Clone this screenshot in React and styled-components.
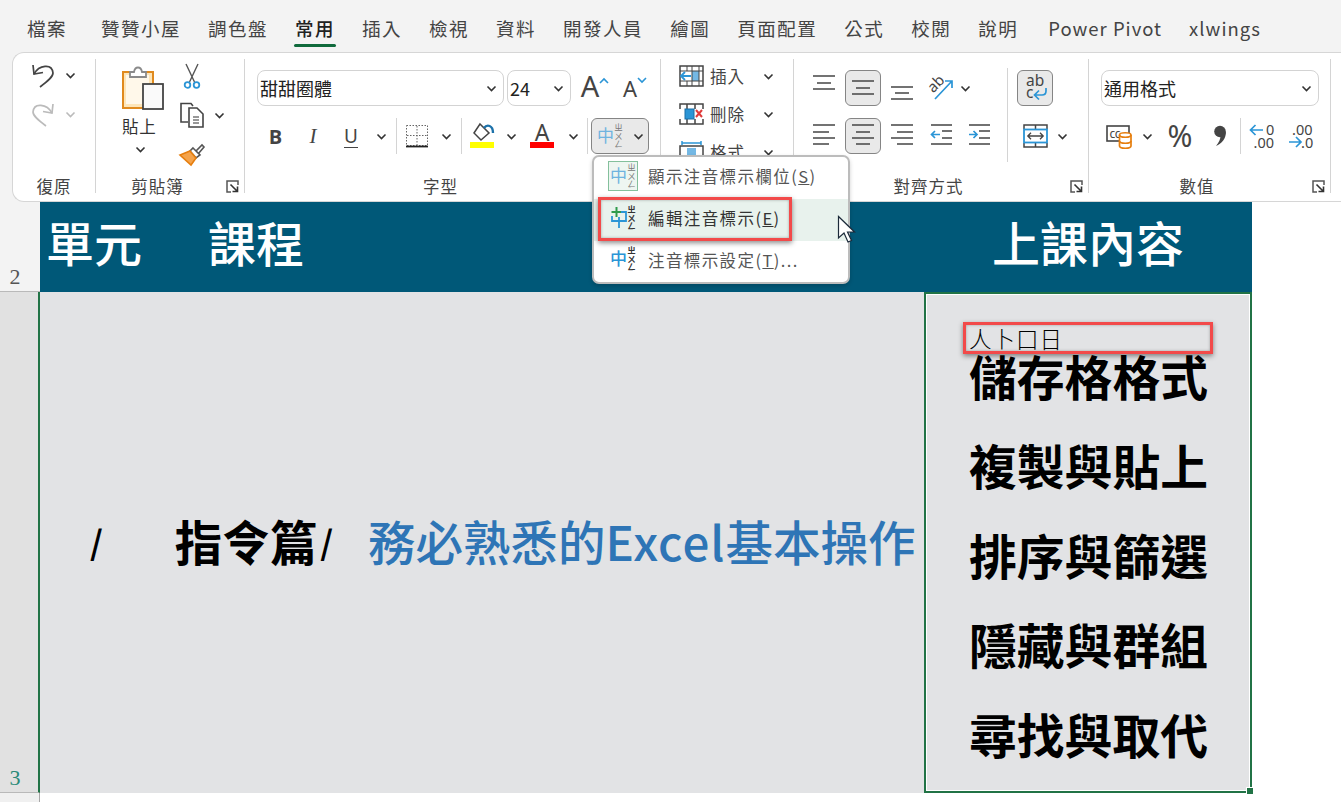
import React from 'react';
import styled, { createGlobalStyle } from 'styled-components';

const CJK = `"Noto Sans CJK TC", "Noto Sans", sans-serif`;
const INK = '#444';
const BLUE = '#2b95d6';
const ORANGE = '#e67e0e';

const GlobalStyle = createGlobalStyle`
  html, body { margin: 0; padding: 0; background: #fff; }
  body { font-family: ${CJK}; }
  * { box-sizing: border-box; }
  svg { overflow: visible; }
`;

const Page = styled.div`
  position: relative;
  width: 1341px;
  height: 802px;
  overflow: hidden;
  background: #f3f3f3;
`;

/* ---------- tabs ---------- */
const TabBar = styled.nav`
  display: flex;
  height: 52px;
  padding: 15px 0 0 27px;
  gap: 27px;
`;
const Tab = styled.span`
  position: relative;
  height: 26px;
  line-height: 26px;
  font-size: 18.5px;
  letter-spacing: 1.5px;
  white-space: nowrap;
  color: ${p => (p.$active ? '#222' : '#444')};
  font-weight: ${p => (p.$active ? 500 : 400)};
  margin-right: ${p => p.$after || 0}px;
  margin-left: ${p => p.$before || 0}px;
  ${p => p.$latin && 'letter-spacing: 1px;'}
  ${p => p.$active && `
    &::after {
      content: '';
      position: absolute;
      left: -1px;
      right: -1px;
      top: 29px;
      height: 3px;
      border-radius: 2px;
      background: #106a3c;
    }
  `}
`;

/* ---------- ribbon ---------- */
const Ribbon = styled.section`
  display: flex;
  height: 150px;
  margin-left: 12px;
  padding: 6px 0 8px;
  background: #fff;
  border: 1px solid #d6d6d6;
  border-right: none;
  border-radius: 12px 0 0 12px;
`;
const Group = styled.div`
  position: relative;
  display: flex;
  flex-direction: column;
  flex: 0 0 ${p => p.$w}px;
  border-right: 1px solid #d4d4d4;
`;
const GroupBody = styled.div`
  flex: 1;
  display: flex;
  min-height: 0;
  padding-left: ${p => p.$left || 0}px;
  padding-top: ${p => p.$top || 0}px;
`;
const GroupLabel = styled.div`
  height: 24px;
  margin-bottom: -5px;
  line-height: 24px;
  text-align: center;
  font-size: 16.5px;
  letter-spacing: 1px;
  color: #444;
  padding-right: ${p => p.$pad || 0}px;
`;
const LauncherMark = styled.svg`
  position: absolute;
  right: 5px;
  bottom: 0;
`;
const Stack = styled.div`
  display: flex;
  flex-direction: column;
  gap: ${p => p.$gap ?? 12}px;
  padding-top: ${p => p.$top || 0}px;
`;
const Row = styled.div`
  display: flex;
  align-items: center;
  height: ${p => p.$h || 36}px;
`;
const Slot = styled.span`
  display: inline-flex;
  align-items: center;
  justify-content: center;
  flex: 0 0 ${p => p.$w}px;
  height: 100%;
  color: ${INK};
`;
const VRule = styled.span`
  flex: 0 0 1px;
  height: ${p => p.$h || 36}px;
  background: #d4d4d4;
  margin: 0 ${p => p.$m ?? 3.5}px;
`;
const ClusterRule = styled.span`
  flex: 0 0 1px;
  height: 94px;
  margin: -2px 9px 0;
  background: #d4d4d4;
`;
const Select = styled.div`
  display: flex;
  align-items: center;
  justify-content: space-between;
  flex: 0 0 ${p => p.$w}px;
  height: 36px;
  padding: 0 6px 0 2px;
  margin-right: ${p => p.$mr || 0}px;
  border: 1px solid #d3d3d3;
  border-radius: 8px;
  font-size: 18px;
  color: #222;
  background: #fff;
`;
const Pressed = styled.span`
  display: inline-flex;
  align-items: center;
  justify-content: center;
  flex: 0 0 ${p => p.$w || 36}px;
  height: 36px;
  margin-left: ${p => p.$ml || 0}px;
  gap: ${p => p.$gap || 0}px;
  background: #e9e9e9;
  border: 1px solid #858585;
  border-radius: 6px;
`;
const Bold = styled.span`
  font-family: "Open Sans", "Noto Sans", sans-serif;
  font-weight: 700;
  font-size: 20px;
  color: #444;
`;
const Ital = styled.span`
  font-family: "Liberation Serif", serif;
  font-style: italic;
  font-size: 21px;
  color: #444;
`;
const Under = styled.span`
  font-family: "Noto Sans", sans-serif;
  font-size: 19px;
  line-height: 22px;
  color: #444;
  border-bottom: 1.5px solid #444;
`;
const GrowA = styled.span`
  position: relative;
  display: inline-block;
  font-family: "Noto Sans", sans-serif;
  font-size: ${p => p.$size}px;
  line-height: 1;
  margin-top: ${p => p.$lift || 0}px;
  color: #444;
`;
const Caret = styled.svg`
  position: absolute;
  left: 100%;
  top: ${p => p.$top}px;
`;
const PasteColumn = styled.div`
  display: flex;
  flex-direction: column;
  align-items: center;
  flex: 0 0 42px;
  padding-top: 6px;
  margin-right: 14px;
`;
const PasteText = styled.div`
  width: 42px;
  margin: 3px 0 8px;
  padding-right: 8px;
  text-align: center;
  font-size: 16.5px;
  letter-spacing: 0.8px;
  line-height: 24px;
  color: #333;
  white-space: nowrap;
`;
const PasteCaret = styled.span`
  display: inline-flex;
  padding-right: 6px;
`;
const CellText = styled.span`
  flex: 0 0 59px;
  padding-left: 6px;
  font-size: 16.5px;
  letter-spacing: 1px;
  line-height: 32px;
  color: #444;
  white-space: nowrap;
`;
const BigGlyph = styled.span`
  font-family: "Noto Sans", sans-serif;
  font-size: ${p => p.$size}px;
  line-height: 1;
  color: #444;
`;

/* ---------- sheet ---------- */
const Sheet = styled.main`
  display: grid;
  grid-template-columns: 40px 884px 328px 1fr;
  grid-template-rows: 90px 501px 9px;
  background: #fff;
`;
const RowHead = styled.div`
  display: flex;
  align-items: flex-end;
  justify-content: center;
  padding-bottom: 2px;
  padding-right: ${p => p.$pr || 10}px;
  font-family: "Liberation Serif", serif;
  font-size: 22px;
  line-height: 24px;
  color: ${p => p.$color};
  background: ${p => p.$bg};
  border-right: ${p => p.$edge || 'none'};
  border-bottom: 1px solid #b9b9b9;
`;
const HeaderCell = styled.div`
  display: flex;
  align-items: center;
  justify-content: ${p => (p.$center ? 'center' : 'flex-start')};
  padding: 0 0 12px ${p => p.$left || 0}px;
  background: #005878;
  color: #fff;
  font-size: 48px;
  font-weight: 500;
  white-space: nowrap;
`;
const HeaderWord = styled.span`
  margin-right: ${p => p.$mr || 0}px;
`;
const TopicCell = styled.div`
  display: flex;
  align-items: center;
  padding: 0 0 4px 50px;
  background: #e2e3e5;
  white-space: nowrap;
`;
const TopicSlash = styled.span`
  font-size: 33px;
  font-weight: 700;
  color: #000;
  margin-left: ${p => p.$ml || 0}px;
  margin-right: ${p => p.$mr || 0}px;
`;
const TopicName = styled.span`
  font-size: 47.5px;
  font-weight: 700;
  color: #000;
`;
const TopicTitle = styled.span`
  margin-left: 35px;
  font-size: 47.5px;
  font-weight: 500;
  color: #2e75b6;
`;
const TopicLatin = styled.span`
  letter-spacing: 1px;
`;
const LessonCell = styled.div`
  position: relative;
  display: flex;
  flex-direction: column;
  padding: 31px 0 0 43px;
  background: #e2e3e5;
  border: 2px solid #217346;
  box-shadow: inset 0 0 0 1px #fff;
`;
const Phonetic = styled.div`
  height: 20.5px;
  line-height: 26px;
  font-size: 22.5px;
  font-weight: 300;
  letter-spacing: 1px;
  color: #000;
`;
const LessonList = styled.div`
  display: flex;
  flex-direction: column;
  gap: 29.6px;
`;
const Lesson = styled.div`
  height: 60px;
  line-height: 60px;
  font-size: 47.8px;
  font-weight: 700;
  color: #000;
  white-space: nowrap;
`;
const FillHandle = styled.span`
  position: absolute;
  right: -4px;
  bottom: -4px;
  width: 8px;
  height: 8px;
  background: #217346;
  border: 1px solid #fff;
`;
const FootHead = styled.div`
  background: #f0f0f0;
  border-right: 1px solid #a8a8a8;
`;
const FootRest = styled.div`
  grid-column: 2 / 5;
  background: #fff;
`;

/* ---------- menu & annotations ---------- */
const Menu = styled.div`
  position: absolute;
  left: 592px;
  top: 155px;
  width: 258px;
  height: 129px;
  background: #fff;
  border: 2px solid #bcbcbc;
  border-radius: 7px;
  box-shadow: 0 2px 4px rgba(0, 0, 0, 0.18);
`;
const MenuItem = styled.div`
  display: flex;
  align-items: center;
  height: ${p => (p.$hover ? 42 : 41.5)}px;
  padding: 0 0 3px 14px;
  background: ${p => (p.$hover ? '#e8f2ed' : 'transparent')};
`;
const MenuIcon = styled.span`
  display: inline-flex;
  align-items: center;
  justify-content: center;
  flex: 0 0 30px;
  height: 30px;
  margin-right: 10px;
  background: ${p => (p.$checked ? '#eef6f1' : 'transparent')};
  border: 1px solid ${p => (p.$checked ? '#84c09c' : 'transparent')};
`;
const MenuText = styled.span`
  font-size: 16.5px;
  letter-spacing: 1.4px;
  white-space: nowrap;
  color: ${p => (p.$hover ? '#333' : '#555')};
`;
const Callout = styled.div`
  position: absolute;
  left: ${p => p.$x}px;
  top: ${p => p.$y}px;
  width: ${p => p.$w}px;
  height: ${p => p.$h}px;
  border: 3px solid #f24a4a;
  box-shadow: 0 2px 5px rgba(0, 0, 0, 0.45), inset 0 0 3px rgba(0, 0, 0, 0.3);
`;
const Pointer = styled.svg`
  position: absolute;
  left: 837px;
  top: 215px;
`;

/* ---------- drawings ---------- */
const Chevron = ({ color = '#333' }) => (
  <svg width="11" height="7" viewBox="0 0 11 7">
    <path d="M1.5 1.5 L5.5 5.5 L9.5 1.5" fill="none" stroke={color} strokeWidth="1.6" />
  </svg>
);
const Launcher = () => (
  <LauncherMark width="13" height="13" viewBox="0 0 13 13">
    <path d="M12 5V1H1V12H5" fill="none" stroke="#555" strokeWidth="1.5" />
    <path d="M4.5 4.5 L11 11 M11.5 6.5 V11.5 H6.5" fill="none" stroke="#333" strokeWidth="1.6" />
  </LauncherMark>
);
const Undo = ({ color, flip }) => (
  <svg width="24" height="26" viewBox="0 0 24 26" style={flip ? { transform: 'scaleX(-1)' } : undefined}>
    <path d="M2 3 L3 12 L12 10.5" fill="none" stroke={color} strokeWidth="1.7" />
    <path d="M3 12 C 8 3, 21 1, 22 11 C 22 15, 17 19, 9 25" fill="none" stroke={color} strokeWidth="1.7" />
  </svg>
);
const PasteIcon = () => (
  <svg width="42" height="46" viewBox="0 0 42 46">
    <rect x="1" y="7" width="30" height="36" fill="#fde5b8" stroke="#e08a1e" strokeWidth="2" />
    <rect x="4" y="10" width="23" height="29" fill="#fff8ea" />
    <path d="M8 12 V7 H12 C13 1, 19 1, 20 7 H24 V12 Z" fill="#fff" stroke="#8a8a8a" strokeWidth="1.8" />
    <rect x="21" y="19" width="20" height="25" fill="#fafafa" stroke="#444" strokeWidth="1.8" />
  </svg>
);
const Scissors = () => (
  <svg width="18" height="26" viewBox="0 0 18 26">
    <path d="M3 1 L11.5 19 M15 1 L6.5 19" fill="none" stroke="#555" strokeWidth="1.4" />
    <circle cx="4.5" cy="22" r="2.8" fill="#fff" stroke={BLUE} strokeWidth="1.8" />
    <circle cx="13.5" cy="22" r="2.8" fill="#fff" stroke={BLUE} strokeWidth="1.8" />
  </svg>
);
const CopyIcon = () => (
  <svg width="26" height="26" viewBox="0 0 26 26">
    <path d="M9 20 H2 V1.5 H12 L14 4" fill="none" stroke="#444" strokeWidth="1.6" />
    <path d="M10 6 H18 L24 12 V25 H10 Z" fill="#fff" stroke="#444" strokeWidth="1.6" />
    <path d="M14 15 H20 M14 18 H20 M14 21 H20" stroke="#777" strokeWidth="1.3" />
  </svg>
);
const BrushIcon = () => (
  <svg width="26" height="24" viewBox="0 0 26 24">
    <path d="M17 9 L23 3 L25 5 L19.5 11.5" fill="#fff" stroke="#555" strokeWidth="1.6" />
    <path d="M14 6 L21 13 L17 16 L11 9 Z" fill="#fff" stroke="#555" strokeWidth="1.6" />
    <path d="M11 9 L17 16 L12 23 L1 13 Z" fill="#f5a34a" stroke={ORANGE} strokeWidth="1.6" />
  </svg>
);
const BorderIcon = () => (
  <svg width="24" height="24" viewBox="0 0 24 24">
    <rect x="1.5" y="1.5" width="21" height="20" fill="none" stroke="#666" strokeWidth="1" strokeDasharray="1.5 1.5" />
    <path d="M12 2 V21 M2 11.5 H22" stroke="#666" strokeWidth="1" strokeDasharray="1.5 1.5" />
    <path d="M1 22.5 H23" stroke="#222" strokeWidth="1.8" />
  </svg>
);
const FillIcon = () => (
  <svg width="26" height="26" viewBox="0 0 26 26">
    <path d="M10 1 L19 10 L11 17 L4 10 Z" fill="#fff" stroke="#444" strokeWidth="1.5" />
    <path d="M14 5 C 17 1, 23 2, 23 10" fill="none" stroke="#1d72aa" strokeWidth="2.4" />
    <rect x="0" y="19" width="24" height="6" fill="#ffff00" />
  </svg>
);
const FontColorIcon = () => (
  <svg width="26" height="26" viewBox="0 0 26 26">
    <text x="13" y="18" textAnchor="middle" fontSize="23" fontFamily="Noto Sans, sans-serif" fill="#444">A</text>
    <rect x="1" y="19" width="24" height="6" fill="#ff0000" />
  </svg>
);
const Zhuyin = ({ ink, bold }) => (
  <text
    x="21.5"
    y="-1"
    fontSize="8.5"
    fontWeight={bold ? 700 : 400}
    fontFamily="Noto Sans CJK TC, sans-serif"
    fill={ink}
    style={{ writingMode: 'vertical-rl', textOrientation: 'upright' }}
  >
    ㄓㄨㄥ
  </text>
);
const PhoneticIcon = ({ hue = BLUE, ink = '#333', bold }) => (
  <svg width="26" height="25" viewBox="0 0 26 25">
    <text x="0" y="18" fontSize="17" fontWeight={bold ? 500 : 400} fontFamily="Noto Sans CJK TC, sans-serif" fill={hue}>中</text>
    <Zhuyin ink={ink} bold={bold} />
  </svg>
);
const PhoneticEditIcon = () => (
  <svg width="26" height="25" viewBox="0 0 26 25">
    <path d="M1.5 6 H11.5 M6.5 1 V11" stroke="#2f9b4c" strokeWidth="2" fill="none" />
    <path d="M11 6 H16 V15 H2 V10 M9 11 V22" stroke={BLUE} strokeWidth="1.8" fill="none" />
    <Zhuyin ink="#333" bold />
  </svg>
);
const InsertIcon = () => (
  <svg width="25" height="22" viewBox="0 0 25 22">
    <rect x="1" y="1" width="23" height="20" fill="#fff" stroke="#444" strokeWidth="1.5" />
    <rect x="13" y="6" width="7" height="10" fill="#74b8e4" />
    <path d="M1 6 H24 M1 16 H24 M8 1 V6 M8 16 V21 M13 1 V21 M20 1 V21" stroke="#444" strokeWidth="1" />
    <path d="M12 11 H2 M6 7 L2 11 L6 15" fill="none" stroke={BLUE} strokeWidth="1.8" />
  </svg>
);
const DeleteIcon = () => (
  <svg width="25" height="22" viewBox="0 0 25 22">
    <path d="M1 6 V1 H24 V6 M1 16 V21 H24 V16 M8 1 V6 M16 1 V6 M8 16 V21 M16 16 V21" fill="none" stroke="#444" strokeWidth="1.5" />
    <rect x="6" y="6" width="9" height="10" fill={BLUE} stroke="#1a6ea5" />
    <path d="M17 7 L23 14 M23 7 L17 14" stroke="#e03b3b" strokeWidth="2" />
  </svg>
);
const FormatIcon = () => (
  <svg width="25" height="22" viewBox="0 0 25 22">
    <rect x="1" y="5" width="23" height="16" fill="none" stroke="#444" strokeWidth="1.5" />
    <path d="M3 2 H22 M3 0 V4 M22 0 V4" stroke={BLUE} strokeWidth="1.5" />
    <rect x="8" y="7" width="9" height="12" fill="#74b8e4" />
  </svg>
);
const Lines = ({ rows, width = 24 }) => (
  <svg width={width} height="36" viewBox={`0 0 ${width} 36`}>
    {rows.map(([x1, x2, y], i) => (
      <path key={i} d={`M${x1} ${y} H${x2}`} stroke="#444" strokeWidth="1.5" />
    ))}
  </svg>
);
const OrientIcon = () => (
  <svg width="26" height="24" viewBox="0 0 26 24">
    <text x="0" y="13" fontSize="15" fontFamily="Noto Sans, sans-serif" fill="#444" transform="rotate(-45 8 9)">ab</text>
    <path d="M7 23 L24 5 M17 5 H24 V12" fill="none" stroke={BLUE} strokeWidth="1.7" />
  </svg>
);
const IndentIcon = ({ flip }) => (
  <svg width="24" height="36" viewBox="0 0 24 36">
    <path d="M2 7 H23 M2 26 H23" stroke="#444" strokeWidth="1.5" />
    {flip ? (
      <>
        <path d="M12 13 H23 M12 20 H23" stroke="#444" strokeWidth="1.5" />
        <path d="M2 16.5 H10 M6.5 13 L10 16.5 L6.5 20" fill="none" stroke={BLUE} strokeWidth="1.7" />
      </>
    ) : (
      <>
        <path d="M13 13 H23 M13 20 H23" stroke="#444" strokeWidth="1.5" />
        <path d="M11 16.5 H2.5 M6 13 L2.5 16.5 L6 20" fill="none" stroke={BLUE} strokeWidth="1.7" />
      </>
    )}
  </svg>
);
const WrapIcon = () => (
  <svg width="28" height="30" viewBox="0 0 28 30">
    <text x="5" y="13" fontSize="15.5" fontFamily="Noto Sans, sans-serif" fill="#444">ab</text>
    <text x="5" y="25" fontSize="15.5" fontFamily="Noto Sans, sans-serif" fill="#444">c</text>
    <path d="M25 15 V18 C25 21, 23 22, 21 22 H14 M18 17.5 L13.5 22 L18 26.5" fill="none" stroke={BLUE} strokeWidth="1.7" />
  </svg>
);
const MergeIcon = () => (
  <svg width="25" height="24" viewBox="0 0 25 24">
    <path d="M1 5 V1 H24 V5 M1 19 V23 H24 V19 M12.5 1 V5 M12.5 19 V23" fill="none" stroke="#444" strokeWidth="1.5" />
    <rect x="1" y="5.5" width="23" height="13" fill="#fff" stroke={BLUE} strokeWidth="1.8" />
    <path d="M5 12 H20 M8 8.8 L4.8 12 L8 15.2 M17 8.8 L20.2 12 L17 15.2" fill="none" stroke="#444" strokeWidth="1.3" />
  </svg>
);
const AccountIcon = () => (
  <svg width="26" height="26" viewBox="0 0 26 26">
    <rect x="1" y="3" width="22" height="15" fill="none" stroke="#444" strokeWidth="1.6" />
    <text x="3.5" y="14.5" fontSize="12" fontFamily="Noto Sans, sans-serif" fill="#444" letterSpacing="-0.6">cc</text>
    <path d="M13.5 12 C13.5 9, 25 9, 25 12 V23 C25 26, 13.5 26, 13.5 23 Z" fill="#fff" stroke={ORANGE} strokeWidth="1.7" />
    <path d="M13.5 12 C13.5 15, 25 15, 25 12 M13.5 18 C13.5 21, 25 21, 25 18" fill="none" stroke={ORANGE} strokeWidth="1.7" />
  </svg>
);
const CommaIcon = () => (
  <svg width="14" height="22" viewBox="0 0 14 22">
    <circle cx="7" cy="6.5" r="5.8" fill="#444" />
    <path d="M12.8 6.5 C13.5 13, 8.5 19, 3 21 C6 17, 7.5 14, 7.5 11 Z" fill="#444" />
  </svg>
);
const DecimalIcon = ({ more }) => (
  <svg width="26" height="26" viewBox="0 0 26 26" fontFamily="Noto Sans, sans-serif" fontSize="14.5" fill="#444">
    {more ? (
      <>
        <path d="M14 7 H1.5 M6.5 2 L1.5 7 L6.5 12" fill="none" stroke={BLUE} strokeWidth="1.7" />
        <text x="17" y="11.5">0</text>
        <text x="4.5" y="24.5">.00</text>
      </>
    ) : (
      <>
        <text x="5" y="11.5">.00</text>
        <path d="M2 19 H14 M9 14 L14 19 L9 24" fill="none" stroke={BLUE} strokeWidth="1.7" />
        <text x="14" y="24.5">.0</text>
      </>
    )}
  </svg>
);

const TABS = ['贊贊小屋', '調色盤'];
const TABS_AFTER = ['插入', '檢視', '資料', '開發人員', '繪圖', '頁面配置', '公式', '校閱', '說明'];
const LESSONS = ['儲存格格式', '複製與貼上', '排序與篩選', '隱藏與群組', '尋找與取代'];

export default function App() {
  return (
    <Page>
      <GlobalStyle />
      <TabBar>
        <Tab $after={7}>檔案</Tab>
        {TABS.map(t => <Tab key={t}>{t}</Tab>)}
        <Tab $active>常用</Tab>
        {TABS_AFTER.map(t => <Tab key={t}>{t}</Tab>)}
        <Tab $latin $before={3}>Power Pivot</Tab>
        <Tab $latin>xlwings</Tab>
      </TabBar>

      <Ribbon>
        <Group $w={83}>
          <GroupBody $left={18} $top={3}>
            <Stack $gap={13}>
              <Row $h={26}>
                <Slot $w={24}><Undo color="#444" /></Slot>
                <Slot $w={30}><Chevron /></Slot>
              </Row>
              <Row $h={26}>
                <Slot $w={24}><Undo color="#bbb" flip /></Slot>
                <Slot $w={30}><Chevron color="#bbb" /></Slot>
              </Row>
            </Stack>
          </GroupBody>
          <GroupLabel>復原</GroupLabel>
        </Group>

        <Group $w={149}>
          <GroupBody $left={26}>
            <PasteColumn>
              <PasteIcon />
              <PasteText>貼上</PasteText>
              <PasteCaret><Chevron /></PasteCaret>
            </PasteColumn>
            <Stack $gap={13} $top={4}>
              <Row $h={26}><Slot $w={28}><Scissors /></Slot></Row>
              <Row $h={26}>
                <Slot $w={28}><CopyIcon /></Slot>
                <Slot $w={26}><Chevron /></Slot>
              </Row>
              <Row $h={26}><Slot $w={28}><BrushIcon /></Slot></Row>
            </Stack>
          </GroupBody>
          <GroupLabel $pad={25}>剪貼簿</GroupLabel>
          <Launcher />
        </Group>

        <Group $w={416}>
          <GroupBody $left={12} $top={11}>
            <Stack>
              <Row>
                <Select $w={247} $mr={3}>甜甜圈體<Chevron /></Select>
                <Select $w={64}>24<Chevron /></Select>
                <Slot $w={38}>
                  <GrowA $size={29} $lift={-6}>
                    A
                    <Caret $top={6} width="10" height="7" viewBox="0 0 10 7"><path d="M1 6 L5 2 L9 6" fill="none" stroke={BLUE} strokeWidth="1.6" /></Caret>
                  </GrowA>
                </Slot>
                <Slot $w={42}>
                  <GrowA $size={22}>
                    A
                    <Caret $top={0} width="10" height="7" viewBox="0 0 10 7"><path d="M1 1 L5 5 L9 1" fill="none" stroke={BLUE} strokeWidth="1.6" /></Caret>
                  </GrowA>
                </Slot>
              </Row>
              <Row>
                <Slot $w={37}><Bold>B</Bold></Slot>
                <Slot $w={38}><Ital>I</Ital></Slot>
                <Slot $w={38}><Under>U</Under></Slot>
                <Slot $w={22}><Chevron /></Slot>
                <VRule />
                <Slot $w={34}><BorderIcon /></Slot>
                <Slot $w={24}><Chevron /></Slot>
                <VRule $m={2.5} />
                <Slot $w={38}><FillIcon /></Slot>
                <Slot $w={18}><Chevron /></Slot>
                <Slot $w={44}><FontColorIcon /></Slot>
                <Slot $w={19}><Chevron /></Slot>
                <VRule />
                <Pressed $w={58} $gap={10}>
                  <PhoneticIcon hue="#6fb3df" ink="#777" />
                  <Chevron />
                </Pressed>
              </Row>
            </Stack>
          </GroupBody>
          <GroupLabel $pad={24}>字型</GroupLabel>
        </Group>

        <Group $w={133}>
          <GroupBody $left={18}>
            <Stack $gap={4}>
              <Row $h={34}><Slot $w={25}><InsertIcon /></Slot><CellText>插入</CellText><Slot $w={11}><Chevron /></Slot></Row>
              <Row $h={34}><Slot $w={25}><DeleteIcon /></Slot><CellText>刪除</CellText><Slot $w={11}><Chevron /></Slot></Row>
              <Row $h={34}><Slot $w={25}><FormatIcon /></Slot><CellText>格式</CellText><Slot $w={11}><Chevron /></Slot></Row>
            </Stack>
          </GroupBody>
          <GroupLabel />
        </Group>

        <Group $w={295}>
          <GroupBody $left={11} $top={11}>
            <Stack>
              <Row>
                <Slot $w={38}><Lines rows={[[1, 23, 6], [5, 19, 13], [1, 23, 19]]} /></Slot>
                <Pressed $ml={2}><Lines rows={[[1, 23, 11], [5, 19, 18], [1, 23, 24]]} /></Pressed>
                <Slot $w={41}><Lines rows={[[1, 23, 17], [5, 19, 23], [1, 23, 29]]} /></Slot>
                <Slot $w={37}><OrientIcon /></Slot>
                <Slot $w={13}><Chevron /></Slot>
              </Row>
              <Row>
                <Slot $w={38}><Lines rows={[[1, 23, 7], [1, 17, 14], [1, 23, 20], [1, 17, 26]]} /></Slot>
                <Pressed $ml={2}><Lines rows={[[1, 23, 7], [5, 19, 14], [1, 23, 20], [5, 19, 26]]} /></Pressed>
                <Slot $w={41}><Lines rows={[[1, 23, 7], [7, 23, 14], [1, 23, 20], [7, 23, 26]]} /></Slot>
                <Slot $w={37}><IndentIcon /></Slot>
                <Slot $w={39}><IndentIcon flip /></Slot>
              </Row>
            </Stack>
            <ClusterRule />
            <Stack>
              <Row><Pressed><WrapIcon /></Pressed></Row>
              <Row>
                <Slot $w={36}><MergeIcon /></Slot>
                <Slot $w={18}><Chevron /></Slot>
              </Row>
            </Stack>
          </GroupBody>
          <GroupLabel $pad={25}>對齊方式</GroupLabel>
          <Launcher />
        </Group>

        <Group $w={242}>
          <GroupBody $left={12} $top={11}>
            <Stack>
              <Row><Select $w={218}>通用格式<Chevron /></Select></Row>
              <Row>
                <Slot $w={36}><AccountIcon /></Slot>
                <Slot $w={20}><Chevron /></Slot>
                <Slot $w={46}><BigGlyph $size={30}>%</BigGlyph></Slot>
                <Slot $w={33}><CommaIcon /></Slot>
                <VRule />
                <Slot $w={36}><DecimalIcon more /></Slot>
                <Slot $w={2} />
                <Slot $w={36}><DecimalIcon /></Slot>
              </Row>
            </Stack>
          </GroupBody>
          <GroupLabel $pad={25}>數值</GroupLabel>
          <Launcher />
        </Group>
      </Ribbon>

      <Sheet>
        <RowHead $bg="#f3f3f3" $color="#555">2</RowHead>
        <HeaderCell $left={6}>
          <HeaderWord $mr={66}>單元</HeaderWord>
          <HeaderWord>課程</HeaderWord>
        </HeaderCell>
        <HeaderCell $center>上課內容</HeaderCell>
        <div />

        <RowHead $bg="#e1e1e1" $color="#2a8a78" $edge="2px solid #217346" $pr={8}>3</RowHead>
        <TopicCell>
          <TopicSlash $mr={72}>/</TopicSlash>
          <TopicName>指令篇</TopicName>
          <TopicSlash $ml={3}>/</TopicSlash>
          <TopicTitle>務必熟悉的<TopicLatin>Excel</TopicLatin>基本操作</TopicTitle>
        </TopicCell>
        <LessonCell>
          <Phonetic>人卜口日</Phonetic>
          <LessonList>
            {LESSONS.map(l => <Lesson key={l}>{l}</Lesson>)}
          </LessonList>
          <FillHandle />
        </LessonCell>
        <div />

        <FootHead />
        <FootRest />
      </Sheet>

      <Menu>
        <MenuItem>
          <MenuIcon $checked><PhoneticIcon hue="#6fb3df" ink="#777" /></MenuIcon>
          <MenuText>顯示注音標示欄位(<u>S</u>)</MenuText>
        </MenuItem>
        <MenuItem $hover>
          <MenuIcon><PhoneticEditIcon /></MenuIcon>
          <MenuText $hover>編輯注音標示(<u>E</u>)</MenuText>
        </MenuItem>
        <MenuItem>
          <MenuIcon><PhoneticIcon bold /></MenuIcon>
          <MenuText>注音標示設定(<u>T</u>)...</MenuText>
        </MenuItem>
      </Menu>

      <Callout $x={598} $y={197} $w={194} $h={44} />
      <Callout $x={963} $y={322} $w={250} $h={32} />
      <Pointer width="20" height="30" viewBox="0 0 20 30">
        <path d="M1.5 1.5 V23 L7 18 L11 27 L14.5 25.5 L10.5 17 H17.5 Z" fill="#fff" stroke="#1c2a3a" strokeWidth="1.2" />
      </Pointer>
    </Page>
  );
}
